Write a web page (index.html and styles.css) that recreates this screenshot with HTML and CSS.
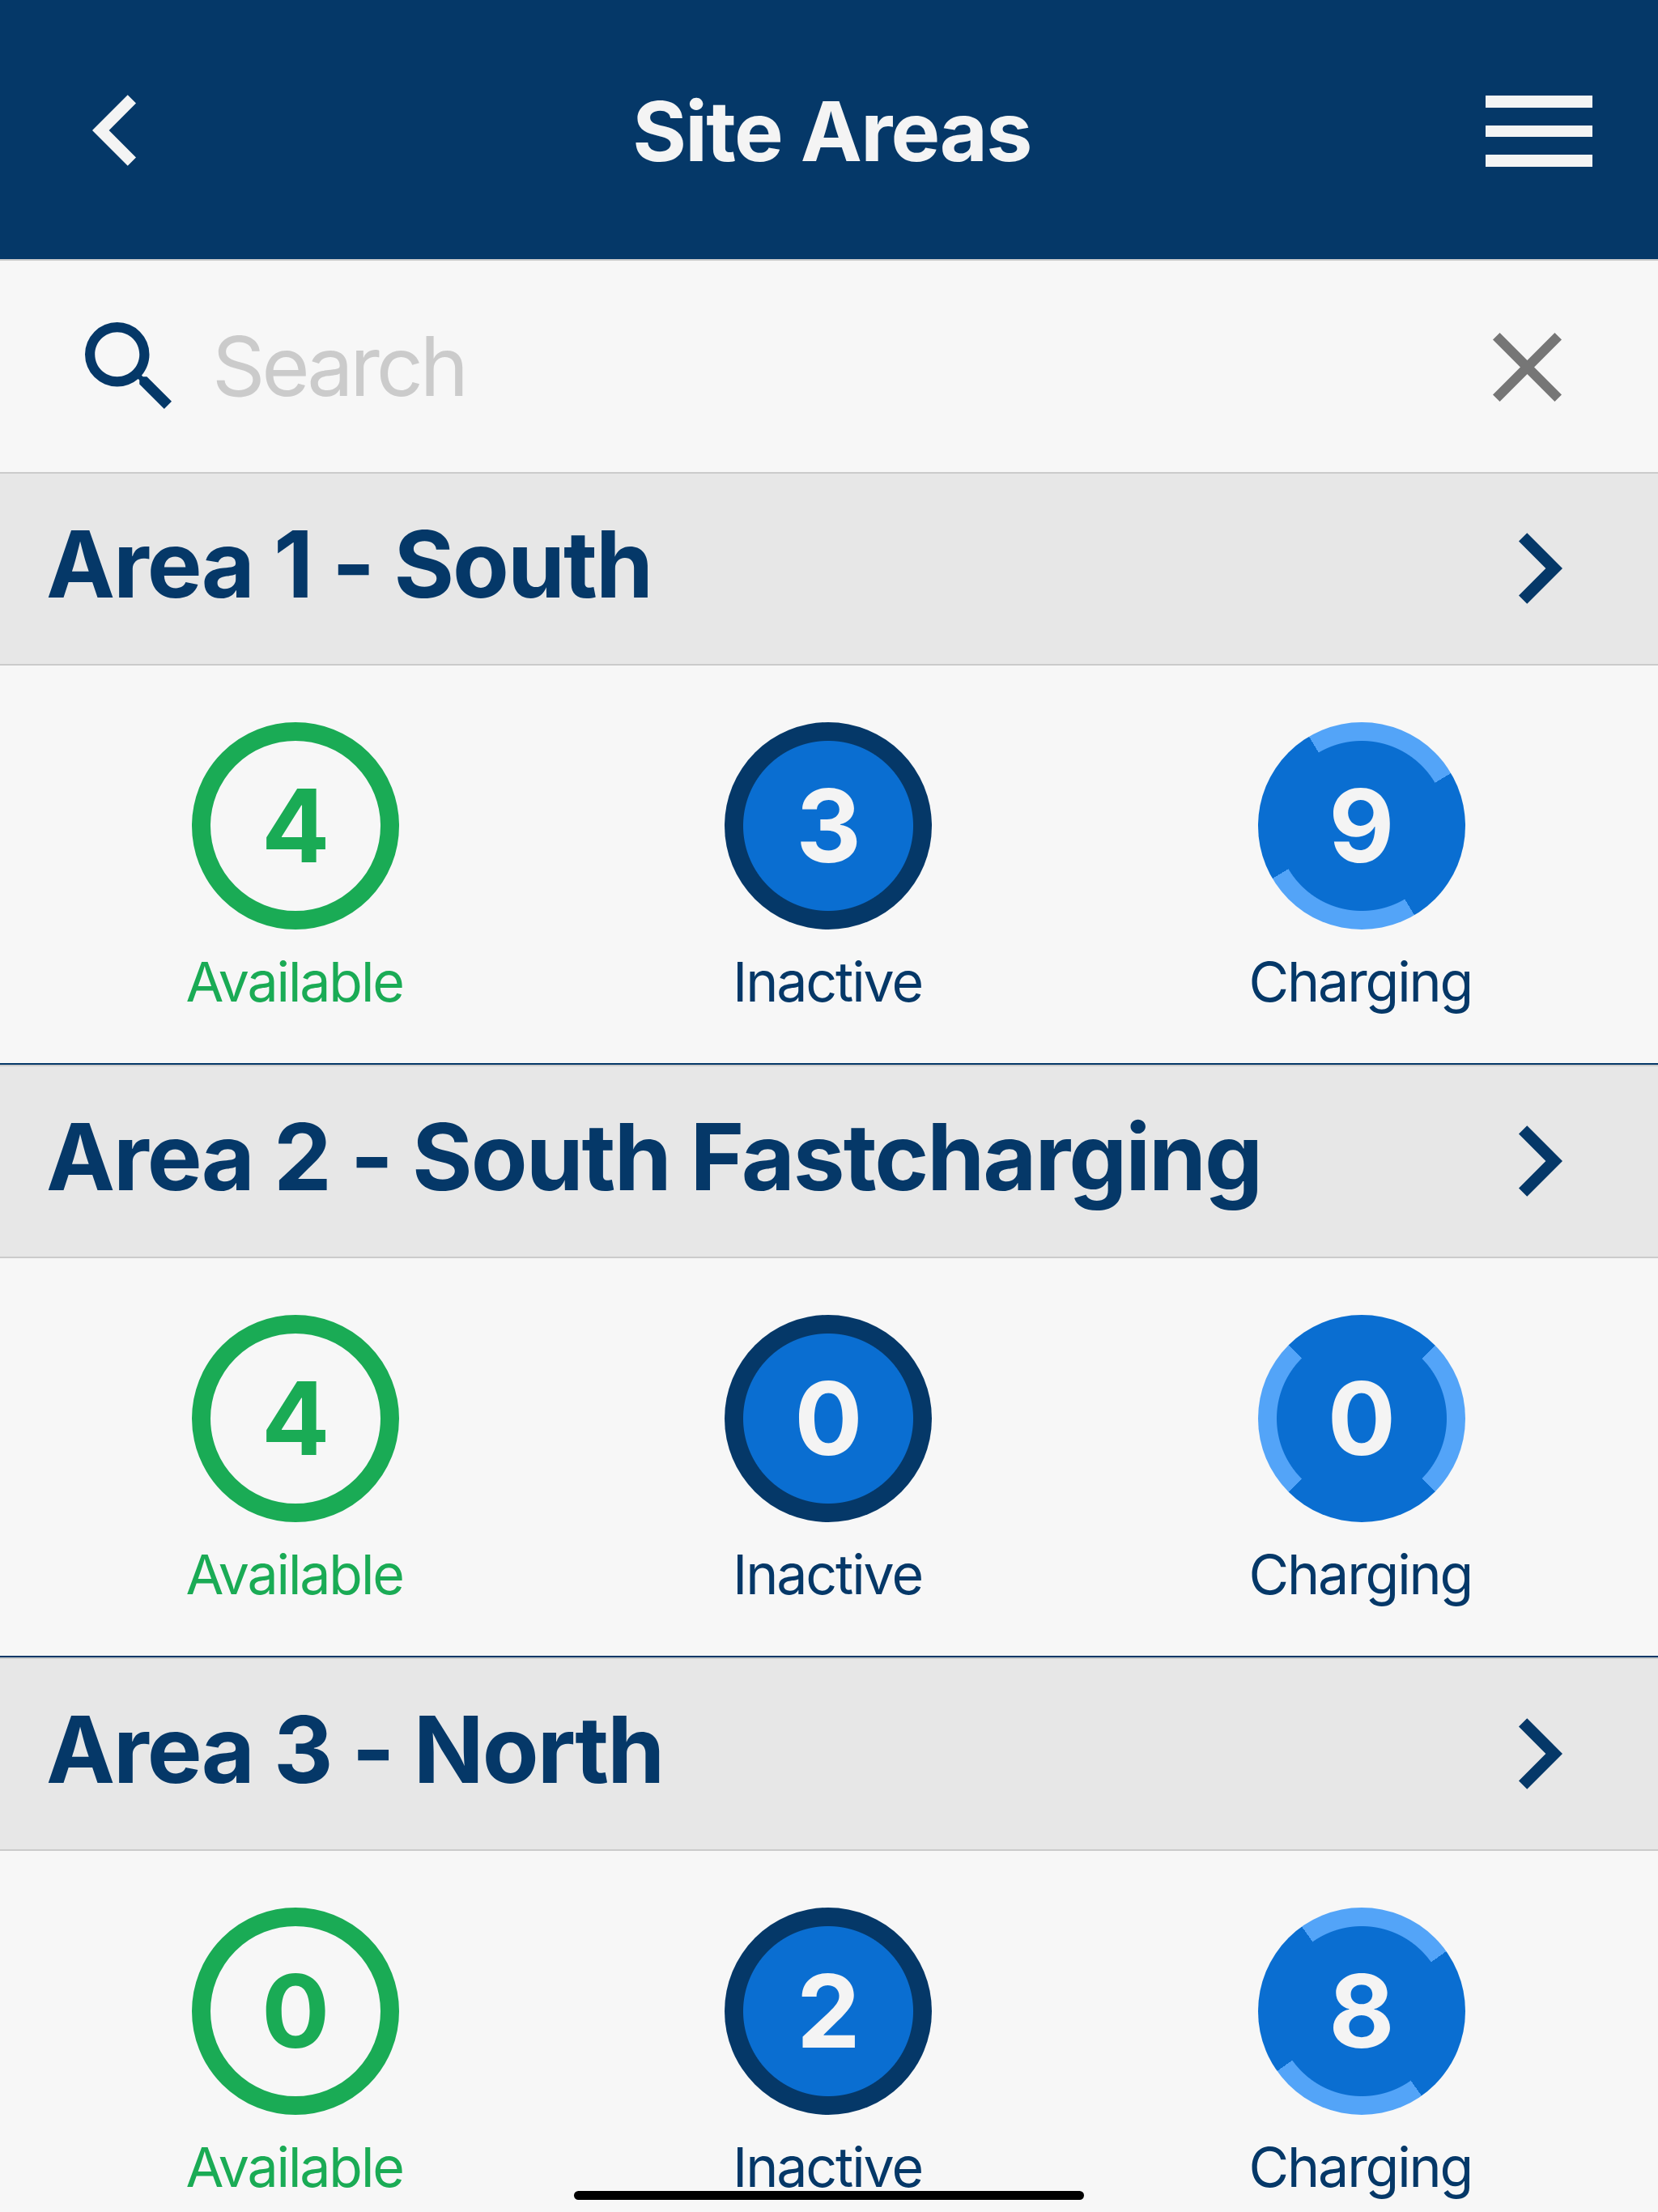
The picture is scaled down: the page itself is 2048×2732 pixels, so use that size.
FILE: index.html
```html
<!DOCTYPE html>
<html lang="en">
<head>
<meta charset="utf-8">
<title>Site Areas</title>
<link rel="stylesheet" href="styles.css">
</head>
<body>
<header class="header">
  <button class="icon-button back" aria-label="Back">
    <svg class="chevron" viewBox="8 6 7.41 12"><path d="M15.41 16.59 10.83 12l4.58-4.59L14 6l-6 6 6 6z"/></svg>
  </button>
  <h1 class="header-title">Site Areas</h1>
  <button class="icon-button menu" aria-label="Menu">
    <span class="menu-bar"></span>
    <span class="menu-bar"></span>
    <span class="menu-bar"></span>
  </button>
</header>

<div class="search">
  <svg class="search-icon" viewBox="3 3 17.5 17.5"><path d="M9.5 3A6.5 6.5 0 0 1 16 9.5c0 1.61-.59 3.09-1.56 4.23l.27.27h.79l5 5-1.5 1.5-5-5v-.79l-.27-.27A6.516 6.516 0 0 1 9.5 16 6.5 6.5 0 0 1 9.5 3m0 2C7 5 5 7 5 9.5S7 14 9.5 14 14 12 14 9.5 12 5 9.5 5z"/></svg>
  <input class="search-input" type="text" placeholder="Search">
  <button class="icon-button" aria-label="Clear">
    <svg class="clear-icon" viewBox="5 5 14 14"><path d="M19 6.41 17.59 5 12 10.59 6.41 5 5 6.41 10.59 12 5 17.59 6.41 19 12 13.41 17.59 19 19 17.59 13.41 12z"/></svg>
  </button>
</div>

<main class="areas">
  <section class="area">
    <div class="area-header">
      <h2 class="area-name">Area 1 - South</h2>
      <svg class="chevron" viewBox="8.59 6 7.41 12"><path d="M8.59 16.59 13.17 12 8.59 7.41 10 6l6 6-6 6z"/></svg>
    </div>
    <div class="stats">
      <div class="stat available"><div class="badge">4</div><div class="label">Available</div></div>
      <div class="stat inactive"><div class="badge">3</div><div class="label">Inactive</div></div>
      <div class="stat charging"><div class="badge" style="--turn: 14.5deg">9</div><div class="label">Charging</div></div>
    </div>
  </section>
  <section class="area">
    <div class="area-header">
      <h2 class="area-name">Area 2 - South Fastcharging</h2>
      <svg class="chevron" viewBox="8.59 6 7.41 12"><path d="M8.59 16.59 13.17 12 8.59 7.41 10 6l6 6-6 6z"/></svg>
    </div>
    <div class="stats">
      <div class="stat available"><div class="badge">4</div><div class="label">Available</div></div>
      <div class="stat inactive"><div class="badge">0</div><div class="label">Inactive</div></div>
      <div class="stat charging"><div class="badge" style="--turn: 90deg">0</div><div class="label">Charging</div></div>
    </div>
  </section>
  <section class="area">
    <div class="area-header">
      <h2 class="area-name">Area 3 - North</h2>
      <svg class="chevron" viewBox="8.59 6 7.41 12"><path d="M8.59 16.59 13.17 12 8.59 7.41 10 6l6 6-6 6z"/></svg>
    </div>
    <div class="stats">
      <div class="stat available"><div class="badge">0</div><div class="label">Available</div></div>
      <div class="stat inactive"><div class="badge">2</div><div class="label">Inactive</div></div>
      <div class="stat charging"><div class="badge" style="--turn: 9.7deg">8</div><div class="label">Charging</div></div>
    </div>
  </section>
</main>
<div class="home-indicator"></div>
</body>
</html>
```
FILE: styles.css
```css
:root {
  --navy: #053868;
  --blue: #0a6ed1;
  --light-blue: #53a4f8;
  --green: #1aab55;
  --page: #f7f7f7;
  --on-dark: #f4f4f4;
  --line: #cbcbcb;
}

* {
  box-sizing: border-box;
}

body {
  margin: 0;
  height: 2732px;
  overflow: hidden;
  display: flex;
  flex-direction: column;
  background: var(--page);
  color: var(--navy);
  font-family: Inter, "Liberation Sans", sans-serif;
}

h1,
h2 {
  margin: 0;
  font-weight: 700;
  white-space: nowrap;
}

svg {
  display: block;
  fill: currentColor;
}

.icon-button {
  padding: 0;
  border: 0;
  background: none;
  color: inherit;
}

.header {
  flex: none;
  display: grid;
  grid-template-columns: 1fr auto 1fr;
  align-items: center;
  height: 320px;
  padding: 3px 81px 0 90px;
  background: var(--navy);
  color: var(--on-dark);
}

.header-title {
  margin: 0 1px 0 -1px;
  font-size: 102px;
  line-height: 124px;
  letter-spacing: -1.65px;
}

.chevron {
  width: 54px;
  height: 88px;
  margin-bottom: 1px;
}

.back {
  justify-self: start;
  margin-left: 24px;
}

.menu {
  justify-self: end;
  display: flex;
  flex-direction: column;
  gap: 22px;
  width: 132px;
  margin-top: 1px;
}

.menu-bar {
  height: 14.7px;
  background: currentColor;
}

.search {
  flex: none;
  display: flex;
  align-items: center;
  height: 263px;
  padding: 0 119px 0 105px;
  border-top: 2px solid var(--line);
}

.search-icon {
  flex: none;
  width: 107px;
  height: 107px;
  margin-bottom: 2px;
}

.search-input {
  flex: 1;
  min-width: 0;
  margin: 0 0 1px 50px;
  padding: 0;
  border: 0;
  outline: 0;
  background: none;
  color: var(--navy);
  font: 400 102px/124px Inter, "Liberation Sans", sans-serif;
  letter-spacing: -4.3px;
}

.search-input::placeholder {
  color: var(--line);
  opacity: 1;
}

.clear-icon {
  width: 85px;
  height: 85px;
  margin-top: 2px;
  color: #767676;
}

.area {
  height: 732px;
  border-bottom: 2px solid var(--navy);
}

.area-header {
  display: flex;
  align-items: center;
  justify-content: space-between;
  height: 239px;
  padding: 0 118px 0 57px;
  border-top: 2px solid var(--line);
  border-bottom: 2px solid var(--line);
  background: #e7e7e7;
}

.area-name {
  margin-bottom: 12px;
  font-size: 114px;
  line-height: 140px;
  letter-spacing: -2px;
}

.stats {
  display: grid;
  grid-template-columns: repeat(3, 1fr);
  padding: 70px 37px 0 36px;
}

.stat {
  display: flex;
  flex-direction: column;
  align-items: center;
}

.badge {
  display: grid;
  place-items: center;
  width: 256px;
  height: 256px;
  border-radius: 50%;
  color: var(--on-dark);
  font-size: 125px;
  font-weight: 700;
  line-height: 152px;
}

.label {
  margin: 23px 3px 0 0;
  font-size: 68px;
  line-height: 82px;
  letter-spacing: -2.1px;
}

.available {
  color: var(--green);
}

.available .badge {
  border: 23px solid var(--green);
  color: var(--green);
}

.inactive .badge {
  background: radial-gradient(circle, var(--blue) 104.5px, var(--navy) 105.5px);
}

/* Two opposite quarters of the ring are highlighted; --turn sets the spinner position. */
.charging .badge {
  background:
    radial-gradient(circle, var(--blue) 104.5px, transparent 105.5px),
    conic-gradient(
      from calc(var(--turn) - 45deg),
      var(--light-blue) 0 90deg,
      var(--blue) 0 180deg,
      var(--light-blue) 0 270deg,
      var(--blue) 0
    );
}

.home-indicator {
  position: absolute;
  left: 50%;
  bottom: 15px;
  width: 630px;
  height: 11px;
  border-radius: 6px;
  background: #000;
  transform: translateX(-50%);
}
```
